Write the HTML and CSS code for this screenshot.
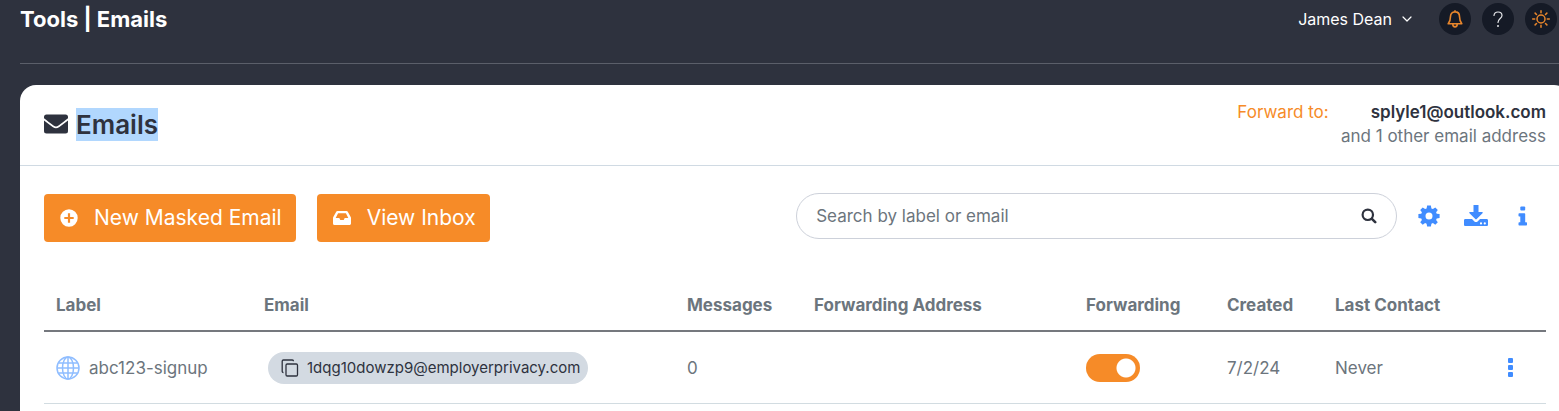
FILE: index.html
```html
<!DOCTYPE html>
<html lang="en">
<head>
<meta charset="utf-8">
<title>Tools | Emails</title>
<link rel="stylesheet" href="styles.css">
</head>
<body>
<div class="app">
  <header class="topbar">
    <h1 class="page-title">Tools | Emails</h1>
    <div class="account">
      <button class="user-menu" type="button">James Dean
        <svg width="10" height="6" viewBox="0 0 10 6" fill="none" stroke="currentColor" stroke-width="1.2" stroke-linecap="round" stroke-linejoin="round"><path d="M1 1l4 4 4-4"/></svg>
      </button>
      <button class="round" type="button" aria-label="Notifications">
        <svg width="16" height="18" viewBox="0 0 16 18" fill="none" stroke="currentColor" stroke-width="1.6" stroke-linejoin="round" stroke-linecap="round"><path d="M8 .9v1M8 1.900C5 1.900 3.500 4 3.500 6.500c0 3.500-.5 5-2.300 7.300h13.600c-1.800-2.300-2.300-3.800-2.300-7.300C12.500 4 11 1.900 8 1.900zM5.800 14.300c0 1.600 1 2.600 2.200 2.600s2.200-1 2.200-2.600"/></svg>
      </button>
      <button class="round round-light" type="button" aria-label="Help">
        <svg width="12" height="17" viewBox="0 0 12 17" fill="none" stroke="currentColor" stroke-width="1.200" stroke-linecap="round"><path d="M2 4.500C2.200 2.400 3.800 1 6 1s4 1.400 4 3.500C10 7.500 6 7.600 6 11.500"/><circle cx="6" cy="15" r=".4" fill="currentColor"/></svg>
      </button>
      <button class="round" type="button" aria-label="Light mode">
        <svg width="20" height="20" viewBox="0 0 20 20" fill="none" stroke="currentColor" stroke-width="1.500" stroke-linecap="round"><circle cx="10" cy="10" r="4"/><path d="M10 1.700v2M10 16.300v2M1.700 10h2M16.300 10h2M4.100 4.100l1.400 1.400M14.500 14.500l1.400 1.400M4.100 15.900l1.400-1.400M14.500 5.500l1.400-1.400"/></svg>
      </button>
    </div>
  </header>

  <main class="card">
    <div class="card-head">
      <h2 class="card-title">
        <svg width="24" height="20" viewBox="0 0 24 20" fill="currentColor"><path d="M2.500.5h19A2.500 2.500 0 0 1 24 3v1.300c-3 2.300-6.500 5-9.500 7.200-2 1.300-3 1.300-5 0C6.500 9.300 3 6.600 0 4.300V3A2.500 2.500 0 0 1 2.500.5z"/><path d="M0 6.400c2.800 2.200 5.800 4.500 8.600 6.500 2.600 1.700 4.200 1.700 6.800 0 2.800-2 5.800-4.300 8.600-6.500V17a2.500 2.500 0 0 1-2.500 2.500h-19A2.500 2.500 0 0 1 0 17z"/></svg>
        <span class="selected">Emails</span>
      </h2>
      <div class="forward">
        <div class="forward-main"><a class="forward-link" href="#">Forward to:</a><strong>splyle1@outlook.com</strong></div>
        <div>and 1 other email address</div>
      </div>
    </div>

    <div class="card-body">
      <div class="toolbar">
        <button class="primary" type="button">
          <svg width="18" height="18" viewBox="0 0 18 18"><path fill="currentColor" fill-rule="evenodd" d="M9 .3a8.700 8.700 0 1 0 0 17.400 8.700 8.700 0 0 0 0-17.400zM7.900 4.300h2.200v3.600h3.600v2.200h-3.600v3.600h-2.200v-3.600h-3.600v-2.200h3.600z"/></svg>
          New Masked Email
        </button>
        <button class="primary" type="button">
          <svg width="18" height="18" viewBox="0 0 18 18"><path fill="currentColor" fill-rule="evenodd" d="M4.500 2h9c.6 0 1 .3 1.300.8l2.900 5.100c.2.300.3.600.3 1v5.600c0 .8-.7 1.500-1.500 1.500h-15A1.500 1.500 0 0 1 0 14.500V8.900c0-.4.100-.7.300-1l2.900-5.100C3.500 2.300 3.900 2 4.500 2zM5.100 4.200L2.700 9h3.600l1 2h3.400l1-2h3.600l-2.400-4.800z"/></svg>
          View Inbox
        </button>
        <form class="search">
          <input type="search" placeholder="Search by label or email" aria-label="Search by label or email">
          <button class="search-go" type="button" aria-label="Search">
            <svg width="16" height="16" viewBox="0 0 16 16" fill="none" stroke="currentColor" stroke-linecap="round"><circle cx="6.800" cy="6.800" r="5.200" stroke-width="2.200"/><path stroke-width="2.600" d="M10.900 10.900l3.300 3.300"/></svg>
          </button>
        </form>
        <div class="tools">
          <button class="tool" type="button" aria-label="Settings">
            <svg width="22" height="22" viewBox="0 0 22 22" fill="currentColor"><path fill-rule="evenodd" d="M9.100.6h3.800l.5 2.900 1.500.6L17.300 2.400 19.800 4.900 18.100 7.200l.6 1.500 2.900.4v3.800l-2.900.5-.6 1.500 1.700 2.400-2.500 2.500-2.400-1.700-1.500.6-.5 2.900H9.100l-.5-2.900-1.500-.6-2.400 1.700-2.500-2.500 1.700-2.400-.6-1.500-2.900-.5V9.100l2.900-.4.600-1.500L2.200 4.900l2.500-2.500 2.400 1.700 1.500-.6zM11 7.500a3.500 3.500 0 1 0 0 7 3.500 3.500 0 0 0 0-7z"/></svg>
          </button>
          <button class="tool" type="button" aria-label="Download">
            <svg width="24" height="22" viewBox="0 0 24 22" fill="currentColor"><path d="M9.500 0h5v7H18c.7 0 1 .7.500 1.200l-5.800 5.900c-.4.400-1 .4-1.400 0L5.500 8.200C5 7.700 5.300 7 6 7h3.500z"/><path fill-rule="evenodd" d="M1.300 14H8l2.400 2.400c.9.800 2.300.8 3.200 0L16 14h6.700c.7 0 1.300.6 1.300 1.300v4.400c0 .7-.6 1.300-1.300 1.300H1.300C.6 21 0 20.400 0 19.700v-4.400C0 14.600.6 14 1.300 14zM17 17.300a1.100 1.100 0 1 0 0 2.200 1.100 1.100 0 0 0 0-2.200zM20.800 17.300a1.100 1.100 0 1 0 0 2.200 1.100 1.100 0 0 0 0-2.200z"/></svg>
          </button>
          <button class="tool" type="button" aria-label="Information">
            <svg width="10" height="20" viewBox="0 0 10 20" fill="currentColor"><rect x="2.300" y=".5" width="4.900" height="4" rx="1"/><path d="M1.200 7.200H6.500c.4 0 .7.300.7.700v8.300h1.100c.5 0 .7.300.7.700v1.900c0 .4-.3.700-.7.700H1.200c-.4 0-.7-.3-.7-.7v-1.900c0-.4.3-.7.700-.7h1.100v-5.700H1.200c-.4 0-.7-.3-.7-.7V7.900c0-.4.3-.7.700-.7z"/></svg>
          </button>
        </div>
      </div>

      <table class="emails">
        <colgroup><col class="c-label"><col><col class="c-messages"><col class="c-address"><col class="c-forwarding"><col class="c-created"><col class="c-contact"><col class="c-menu"></colgroup>
        <thead>
          <tr><th>Label</th><th>Email</th><th>Messages</th><th>Forwarding Address</th><th>Forwarding</th><th>Created</th><th>Last Contact</th><th></th></tr>
        </thead>
        <tbody>
          <tr>
            <td>
              <div class="label">
                <svg width="24" height="24" viewBox="0 0 24 24" fill="none" stroke="currentColor" stroke-width="1.500"><circle cx="12" cy="12" r="11"/><ellipse cx="12" cy="12" rx="5.500" ry="11"/><path d="M12 1v22M1 12h22M2.500 7h19M2.500 17h19"/></svg>
                abc123-signup
              </div>
            </td>
            <td>
              <button class="pill" type="button">
                <svg width="18" height="18" viewBox="0 0 18 18" fill="none" stroke="currentColor" stroke-width="1.300" stroke-linejoin="round"><rect x="5" y="5" width="11.500" height="12" rx="1.200"/><path d="M2.500 13.500A1.200 1.200 0 0 1 1.200 12.300V2.200A1.200 1.200 0 0 1 2.400 1H11.300A1.200 1.200 0 0 1 12.500 2.200"/></svg>
                1dqg10dowzp9@employerprivacy.com
              </button>
            </td>
            <td>0</td>
            <td></td>
            <td><input class="switch" type="checkbox" checked aria-label="Forwarding"></td>
            <td>7/2/24</td>
            <td>Never</td>
            <td>
              <button class="row-menu" type="button" aria-label="Row actions">
                <svg width="5" height="19" viewBox="0 0 5 19" fill="currentColor"><rect width="5" height="5" rx="1"/><rect y="7" width="5" height="5" rx="1"/><rect y="14" width="5" height="5" rx="1"/></svg>
              </button>
            </td>
          </tr>
        </tbody>
      </table>
    </div>
  </main>
</div>
</body>
</html>
```
FILE: styles.css
```css
* { box-sizing: border-box; }

body {
  margin: 0;
  overflow: hidden;
  background: #2e323e;
  color: #6c757d;
  font: 17px/24px Inter, "Open Sans", sans-serif;
}

button {
  margin: 0;
  padding: 0;
  border: 0;
  background: none;
  color: inherit;
  font: inherit;
  cursor: pointer;
}

svg { display: block; flex: none; }

/* The panel runs past the right edge of the window */
.app {
  display: flex;
  flex-direction: column;
  min-height: 100vh;
  margin: 0 -11px 0 20px;
}

.topbar {
  display: flex;
  justify-content: space-between;
  align-items: flex-start;
  height: 64px;
  padding: 3px 13px 0 0;
  border-bottom: 1px solid #5b5f6a;
}

.page-title {
  margin: 0;
  color: #fff;
  font-size: 22px;
  font-weight: 700;
  line-height: 32px;
}

.account { display: flex; align-items: center; gap: 11px; }

.user-menu {
  display: flex;
  align-items: center;
  gap: 10px;
  margin-right: 16px;
  color: #fff;
  font-size: 16px;
}

.round {
  display: flex;
  align-items: center;
  justify-content: center;
  width: 32px;
  height: 32px;
  border-radius: 50%;
  background: #151a26;
  color: #e8862c;
}

.round-light { color: #e4e5e8; }

.card {
  flex: 1;
  margin-top: 21px;
  border-radius: 16px 16px 0 0;
  background: #fff;
}

.card-head {
  display: flex;
  align-items: center;
  justify-content: space-between;
  height: 81px;
  padding: 0 24px 2px;
  border-bottom: 1px solid #d0dae3;
}

.card-title {
  display: flex;
  align-items: center;
  gap: 8px;
  margin: 0;
  color: #2e323e;
  font-size: 26px;
  font-weight: 600;
  line-height: 33px;
}

.selected { background: #b1d7fe; }

.forward { text-align: right; }
.forward-main { display: flex; justify-content: flex-end; gap: 42px; }
.forward-link { color: #f68b28; text-decoration: none; }
.forward strong { color: #2e323e; font-weight: 600; }

.card-body { padding: 27px 24px 0; }

.toolbar { display: flex; align-items: flex-start; }

.primary {
  display: flex;
  align-items: center;
  gap: 16px;
  height: 48px;
  margin: 1px 21px 0 0;
  padding: 0 14px 0 16px;
  border-radius: 4px;
  background: #f68b28;
  color: #fff;
  font-size: 21px;
  white-space: nowrap;
}

.search {
  display: flex;
  align-items: center;
  width: 40%;
  height: 46px;
  margin-left: auto;
  padding: 0 19px;
  border: 1px solid #cdd1da;
  border-radius: 23px;
}

.search input {
  flex: 1;
  min-width: 0;
  padding: 0;
  border: 0;
  outline: 0;
  background: none;
  color: #2e323e;
  font: inherit;
}

.search input::placeholder { color: #6c757d; opacity: 1; }
.search-go { color: #2e323e; }

.tools { display: flex; margin-left: 8px; color: #408cff; }

.tool {
  display: flex;
  align-items: center;
  justify-content: center;
  width: 47px;
  height: 46px;
}

.emails {
  width: 100%;
  margin-top: 38px;
  border-collapse: separate;
  border-spacing: 0;
  table-layout: fixed;
}

.c-label { width: 208px; }
.c-messages { width: 127px; }
.c-address { width: 272px; }
.c-forwarding { width: 141px; }
.c-created { width: 108px; }
.c-contact { width: 172px; }
.c-menu { width: 51px; }

.emails th {
  height: 52px;
  padding: 0 12px;
  border-bottom: 2px solid #75787e;
  font-weight: 700;
  text-align: left;
  white-space: nowrap;
}

.emails td {
  height: 72px;
  padding: 0 12px;
  border-bottom: 1px solid #d2dce1;
  vertical-align: middle;
}

.label { display: flex; align-items: center; gap: 9px; }
.label svg { color: #8fbdff; }

.pill {
  display: flex;
  align-items: center;
  gap: 8px;
  height: 32px;
  margin-left: 4px;
  padding: 0 8px 0 13px;
  border-radius: 16px;
  background: #d3dae2;
  color: #2e323e;
  font-size: 15px;
}

.switch {
  display: block;
  width: 54px;
  height: 28px;
  margin: 0;
  border-radius: 14px;
  background: #ccd1d8 radial-gradient(circle at 14px 14px, #fff 9px, transparent 10px);
  appearance: none;
}

.switch:checked {
  background: #f68b28 radial-gradient(circle at 40px 14px, #fff 9px, transparent 10px);
}

.row-menu { display: block; padding: 0 1px; color: #408cff; }
```
